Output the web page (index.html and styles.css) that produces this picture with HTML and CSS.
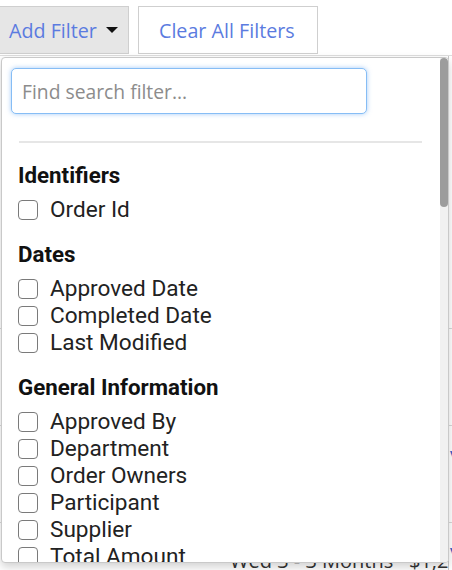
FILE: index.html
```html
<!DOCTYPE html>
<html lang="en">
<head>
<meta charset="utf-8">
<title>Filters</title>
<link rel="stylesheet" href="styles.css">
</head>
<body>
<div class="toolbar">
  <button class="btn btn-add" type="button">Add Filter <span class="caret"></span></button>
  <button class="btn btn-clear" type="button">Clear All Filters</button>
</div>

<div class="results">
  <div class="row row-first"><div class="cell-main"></div><div class="cell-side"></div></div>
  <div class="row row-mid"><div class="cell-main"></div><div class="cell-side"></div></div>
  <div class="row row-mid"><div class="cell-main"></div><div class="cell-side"><span class="side-link">V</span></div></div>
  <div class="row row-last"><div class="cell-main"><span class="row-text">Wed 3 - 3 Months · $1,250</span></div><div class="cell-side"><span class="side-link">V</span></div></div>
</div>

<div class="dropdown">
  <div class="dropdown-body">
    <div class="search-wrap">
      <input class="search" type="text" placeholder="Find search filter...">
    </div>
    <hr class="divider">
    <div class="groups">
      <div class="group">
        <div class="group-title">Identifiers</div>
        <label class="item"><input type="checkbox" class="cb"><span>Order Id</span></label>
      </div>
      <div class="group">
        <div class="group-title">Dates</div>
        <label class="item"><input type="checkbox" class="cb"><span>Approved Date</span></label>
        <label class="item"><input type="checkbox" class="cb"><span>Completed Date</span></label>
        <label class="item"><input type="checkbox" class="cb"><span>Last Modified</span></label>
      </div>
      <div class="group">
        <div class="group-title">General Information</div>
        <label class="item"><input type="checkbox" class="cb"><span>Approved By</span></label>
        <label class="item"><input type="checkbox" class="cb"><span>Department</span></label>
        <label class="item"><input type="checkbox" class="cb"><span>Order Owners</span></label>
        <label class="item"><input type="checkbox" class="cb"><span>Participant</span></label>
        <label class="item"><input type="checkbox" class="cb"><span>Supplier</span></label>
        <label class="item"><input type="checkbox" class="cb"><span>Total Amount</span></label>
        <label class="item"><input type="checkbox" class="cb"><span>Type</span></label>
      </div>
    </div>
  </div>
  <div class="scrollbar"><div class="thumb"></div></div>
</div>
</body>
</html>
```

FILE: styles.css
```css
* {
  box-sizing: border-box;
}

html, body {
  margin: 0;
  padding: 0;
  background: #ffffff;
  overflow: hidden;
}

body {
  font-family: "Open Sans", "Liberation Sans", sans-serif;
  position: relative;
  width: 452px;
  height: 570px;
}

/* Toolbar */
.toolbar {
  display: flex;
  gap: 9px;
  padding-top: 6px;
  margin-left: -2px;
  height: 55px;
  align-items: flex-start;
}

.btn {
  height: 48px;
  border: 1px solid #cfcfcf;
  border-radius: 0;
  font-family: "Open Sans", "Liberation Sans", sans-serif;
  font-size: 19.7px;
  color: #5b7be0;
  display: flex;
  align-items: center;
  margin: 0;
  padding-top: 2px;
  cursor: pointer;
}

.btn-add {
  width: 131px;
  background: #e6e6e6;
  padding-left: 10px;
  padding-right: 0;
  gap: 9px;
}

.btn-clear {
  width: 180px;
  background: #ffffff;
  padding-left: 20px;
  padding-right: 0;
}

.caret {
  width: 0;
  height: 0;
  border-left: 6px solid transparent;
  border-right: 6px solid transparent;
  border-top: 6px solid #111111;
  margin-top: -1px;
}

/* Background results table */
.results {
  border-top: 1px solid #dedede;
}

.row {
  display: flex;
  border-bottom: 1px solid #d8d8d8;
}

.row-first { height: 273px; }
.row-mid { height: 97px; }
.row-last { height: 60px; border-bottom: none; }

.cell-main {
  width: 449px;
  border-right: 1px solid #c8c8c8;
  overflow: hidden;
}

.cell-side {
  flex: 1;
  overflow: hidden;
}

.side-link {
  display: block;
  padding-top: 18px;
  padding-left: 1px;
  color: #3f5fc8;
  font-size: 20px;
  font-family: "Open Sans", sans-serif;
}

.row-text {
  display: block;
  padding: 24px 0 0 230px;
  font-size: 20px;
  color: #333333;
  font-family: "Open Sans", sans-serif;
  white-space: nowrap;
}

/* Dropdown menu */
.dropdown {
  position: absolute;
  top: 57px;
  left: 1px;
  width: 448px;
  height: 506px;
  background: #ffffff;
  border: 1px solid #c9c9c9;
  border-radius: 4px;
  box-shadow: 0 4px 10px rgba(0, 0, 0, 0.18);
  display: flex;
  overflow: hidden;
}

.dropdown-body {
  flex: 1;
  min-width: 0;
  overflow: hidden;
}

.scrollbar {
  width: 8px;
  flex: none;
  background: #f1f1f1;
}

.thumb {
  height: 149px;
  background: #9c9c9c;
  border-radius: 4px;
}

.search-wrap {
  padding: 10px 0 0 9px;
}

.search {
  width: 356px;
  height: 46px;
  border: 1px solid #86bdf5;
  border-radius: 5px;
  box-shadow: 0 0 5px rgba(90, 160, 240, 0.55);
  padding: 0 10px;
  font-family: "Open Sans", "Liberation Sans", sans-serif;
  font-size: 19.3px;
  color: #333333;
  outline: none;
  display: block;
}

.search::placeholder {
  color: #8c8c8c;
}

.divider {
  margin: 27px 18px 0 17px;
  border: none;
  border-top: 2px solid #e6e6e6;
  height: 0;
}

.groups {
  padding: 0 16px;
  font-family: Roboto, "Noto Sans", sans-serif;
}

.group {
  padding-top: 16.5px;
}

.group:first-child {
  padding-top: 17.5px;
}

.group-title {
  font-size: 22.3px;
  font-weight: 700;
  line-height: 28px;
  color: #111111;
  margin-bottom: 7.5px;
}

.item {
  display: flex;
  align-items: center;
  gap: 12px;
  height: 27px;
  font-size: 22.6px;
  color: #222222;
  white-space: nowrap;
}

.cb {
  appearance: none;
  -webkit-appearance: none;
  width: 20px;
  height: 20px;
  margin: 0;
  border: 1.5px solid #7a7a7a;
  border-radius: 4px;
  background: #ffffff;
  flex: none;
}
```
